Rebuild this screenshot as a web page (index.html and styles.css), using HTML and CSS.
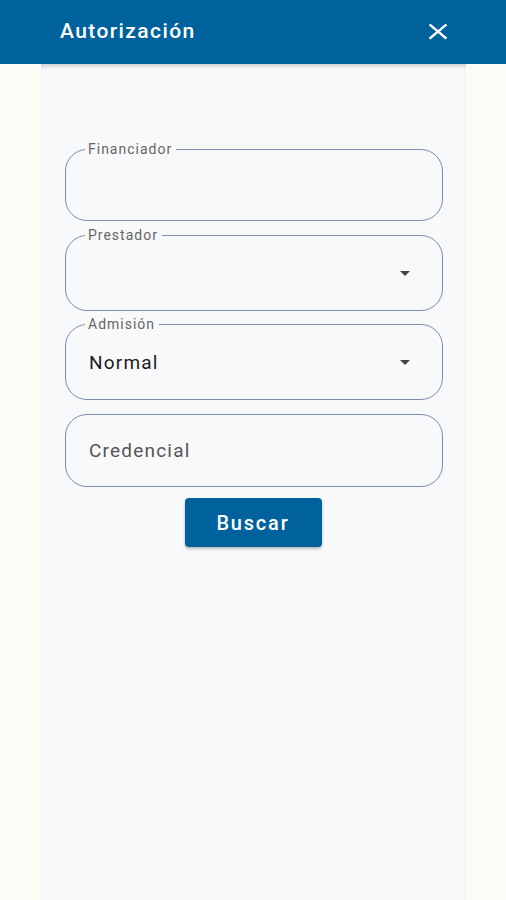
FILE: index.html
```html
<!DOCTYPE html>
<html lang="es">
<head>
  <meta charset="UTF-8">
  <title>Autorización</title>
  <link rel="stylesheet" href="styles.css">
</head>
<body>

<div class="header">
  <span class="title">Autorización</span>
  <svg class="close" width="32" height="27" viewBox="0 0 24 24" preserveAspectRatio="none">
    <path d="M19 6.41L17.59 5 12 10.59 6.41 5 5 6.41 10.59 12 5 17.59 6.41 19 12 13.41 17.59 19 19 17.59 13.41 12z" fill="#fff"/>
  </svg>
</div>

<div class="panel">
  <div class="field field-short">
    <span class="label">Financiador</span>
    <div class="value"></div>
  </div>

  <div class="field">
    <span class="label">Prestador</span>
    <div class="value"><span class="text"></span><span class="arrow"></span></div>
  </div>

  <div class="field field-gap">
    <span class="label">Admisión</span>
    <div class="value"><span class="text">Normal</span><span class="arrow"></span></div>
  </div>

  <div class="field field-plain">
    <div class="value"><span class="placeholder">Credencial</span></div>
  </div>

  <div class="actions">
    <button>Buscar</button>
  </div>
</div>

</body>
</html>
```

FILE: styles.css
```css
body {
  margin: 0;
  font-family: Roboto, 'Noto Sans', sans-serif;
  background-color: #fcfcf6;
  color: #1c1c1c;
}

.header {
  height: 64px;
  background-color: #00629c;
  display: flex;
  align-items: center;
  justify-content: space-between;
  padding: 0 52px 0 60px;
}

.title {
  color: #fff;
  font-size: 21px;
  font-weight: 500;
  letter-spacing: 1.4px;
  margin-top: -2px;
}

.close {
  display: block;
  margin-top: -2px;
}

.panel {
  width: 425px;
  margin-left: 41px;
  min-height: 836px;
  box-sizing: border-box;
  padding: 85px 23px 0 24px;
  background-color: #f8f9fa;
  box-shadow: inset 0 4px 4px -2px rgba(0, 0, 0, 0.18);
}

.field {
  height: 76px;
  box-sizing: border-box;
  border: 1px solid #7f8db2;
  border-radius: 22px;
  display: flex;
  flex-direction: column;
  margin-bottom: 13px;
}

.field-short {
  height: 72px;
  margin-bottom: 14px;
}

.field-gap {
  margin-bottom: 14px;
}

.field-plain {
  height: 73px;
  margin-bottom: 11px;
}

.label {
  align-self: flex-start;
  margin: -9px 0 -7px 19px;
  padding: 0 4px 0 3px;
  line-height: 16px;
  font-size: 14px;
  letter-spacing: 1px;
  color: #666;
  background-color: #f8f9fa;
}

.value {
  flex: 1;
  display: flex;
  align-items: center;
  justify-content: space-between;
  padding: 0 32px 0 23px;
  font-size: 19px;
  letter-spacing: 1.2px;
}

.placeholder {
  color: #555;
}

.arrow {
  width: 0;
  height: 0;
  border-left: 5px solid transparent;
  border-right: 5px solid transparent;
  border-top: 5px solid #444;
}

.actions {
  display: flex;
  justify-content: center;
  padding-right: 2px;
}

button {
  width: 137px;
  height: 49px;
  border: none;
  border-radius: 4px;
  background-color: #00629c;
  color: #fff;
  font-family: Roboto, 'Noto Sans', sans-serif;
  font-size: 20px;
  font-weight: 500;
  letter-spacing: 1.8px;
  box-shadow: 0 2px 3px rgba(0, 0, 0, 0.25);
  cursor: pointer;
}
```
